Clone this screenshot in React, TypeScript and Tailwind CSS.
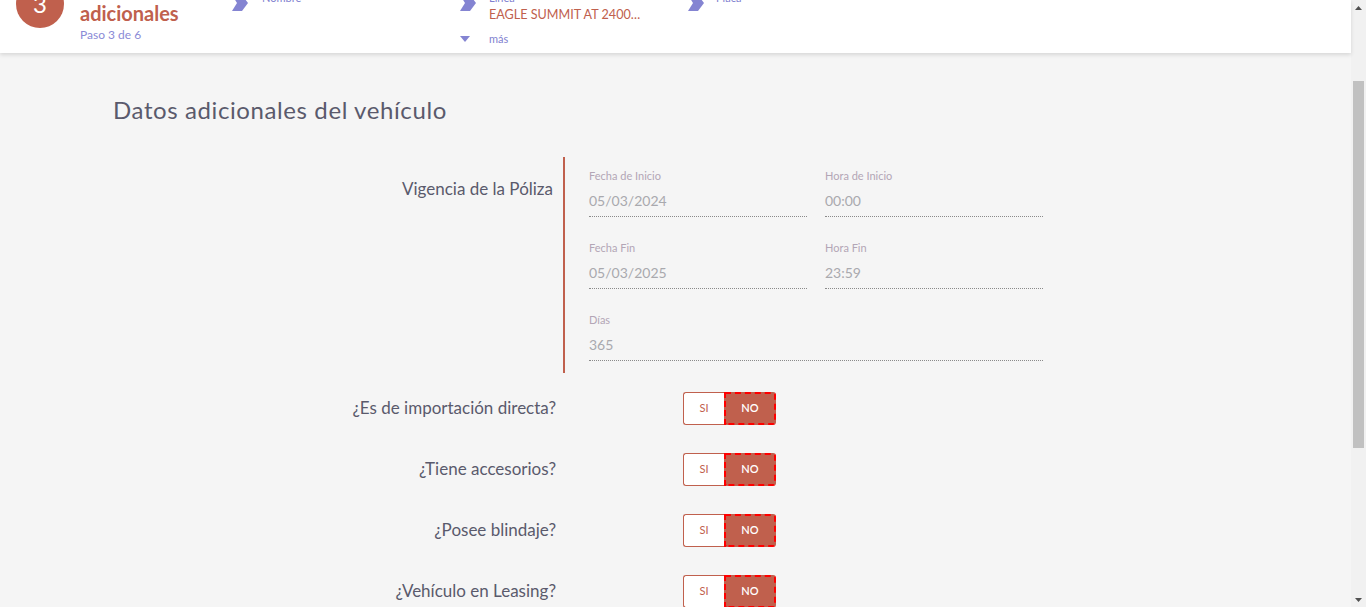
import React from 'react';

const RED = '#c0604d';

// breadcrumb chevron in the step header
const Chevron = () => (
  <svg width="16" height="16" viewBox="0 0 16 16" className="shrink-0">
    <polygon points="0,0 10,0 16,8 10,16 0,16 5,8" fill="#8484d2" />
  </svg>
);

interface FieldProps {
  label: string;
  value: string;
}

const Field: React.FC<FieldProps> = ({ label, value }) => (
  <div className="border-b border-dotted border-[#8a8a8a] pb-[5px]">
    <div className="text-[11px] leading-[14px] text-[#b3a6b6]">{label}</div>
    <div className="mt-[8px] text-[14px] leading-[20px] text-[#a9a9ae]">{value}</div>
  </div>
);

const Toggle = () => (
  <div className="flex h-[33px] w-[93px] text-[11px]">
    <div className="flex w-[41px] items-center justify-center rounded-l-[3px] border border-r-0 border-[#c0604d] bg-white text-[#c0604d]">
      SI
    </div>
    <div className="flex flex-1 items-center justify-center rounded-r-[3px] border-2 border-dashed border-[#ff0000] bg-[#c0604d] font-semibold text-white">
      NO
    </div>
  </div>
);

const questions = [
  '¿Es de importación directa?',
  '¿Tiene accesorios?',
  '¿Posee blindaje?',
  '¿Vehículo en Leasing?',
];

const Header = () => (
  <div className="relative z-10 h-[53px] shrink-0 overflow-hidden bg-white shadow-[0_2px_4px_rgba(0,0,0,0.12)]">
    <div className="-mt-[26px] flex">
      {/* step indicator */}
      <div className="flex w-[232px] shrink-0 pl-[16px]">
        <div
          className="mt-[6px] flex h-12 w-12 shrink-0 items-center justify-center rounded-full text-[24px] text-white"
          style={{ backgroundColor: RED }}
        >
          3
        </div>
        <div className="ml-[16px] mt-[3px] flex flex-col">
          <div className="text-[20px] font-bold leading-[24px] text-[#c0604d]">Datos</div>
          <div className="text-[20px] font-bold leading-[24px] text-[#c0604d]">adicionales</div>
          <div className="mt-[2px] text-[12px] leading-[16px] text-[#8a8ad6]">Paso 3 de 6</div>
        </div>
      </div>

      {/* breadcrumbs */}
      <div className="mt-[17px] flex w-[228px] shrink-0">
        <div className="mt-[4px]"><Chevron /></div>
        <div className="ml-[14px] text-[11px] leading-[14px] text-[#7f7fcf]">Nombre</div>
      </div>
      <div className="mt-[17px] flex w-[228px] shrink-0 flex-col">
        <div className="flex">
          <div className="mt-[4px]"><Chevron /></div>
          <div className="ml-[13px] flex flex-col">
            <div className="text-[11px] leading-[14px] text-[#7f7fcf]">Línea</div>
            <div className="w-[152px] truncate text-[12.6px] leading-[20px] text-[#c0604d]">
              EAGLE SUMMIT AT 2400 CC 4X4
            </div>
          </div>
        </div>
        <div className="mt-[7px] flex items-center">
          <svg width="10" height="6" viewBox="0 0 10 6">
            <polygon points="0,0 10,0 5,6" fill="#8484d2" />
          </svg>
          <span className="ml-[19px] text-[11px] leading-[14px] text-[#7f7fcf]">más</span>
        </div>
      </div>
      <div className="mt-[17px] flex w-[228px] shrink-0">
        <div className="mt-[4px]"><Chevron /></div>
        <div className="ml-[12px] text-[11px] leading-[14px] text-[#7f7fcf]">Placa</div>
      </div>
    </div>
  </div>
);

const ScrollBar = () => (
  <div className="flex h-full w-[15px] shrink-0 flex-col bg-[#f1f1f1]">
    <div className="flex h-[15px] items-center justify-center">
      <svg width="7" height="4" viewBox="0 0 7 4">
        <polygon points="0,4 7,4 3.5,0" fill="#505050" />
      </svg>
    </div>
    <div className="h-[66px]" />
    <div className="mx-[2px] h-[367px] bg-[#c1c1c1]" />
    <div className="flex-1" />
    <div className="flex h-[15px] items-center justify-center">
      <svg width="7" height="4" viewBox="0 0 7 4">
        <polygon points="0,0 7,0 3.5,4" fill="#505050" />
      </svg>
    </div>
  </div>
);

export default function App() {
  return (
    <div
      className="flex h-[607px] w-full overflow-hidden bg-[#f5f5f5]"
      style={{ fontFamily: 'Lato, "Open Sans", sans-serif' }}
    >
      <div className="flex min-w-0 flex-1 flex-col">
        <Header />

        <div className="pl-[113px] pt-[43px]">
          <h1 className="text-[24px] leading-[28px] tracking-[0.6px] text-[#5a5a6c]">
            Datos adicionales del vehículo
          </h1>

          {/* policy dates */}
          <div className="mt-[33px] flex">
            <div className="w-[440px] pt-[20px] text-right text-[17px] leading-[24px] text-[#5a5a6c]">
              Vigencia de la Póliza
            </div>
            <div className="ml-[10px] w-[2px]" style={{ backgroundColor: RED }} />
            <div className="w-[478px] pb-[12px] pl-[24px] pt-[12px]">
              <div className="grid grid-cols-2 gap-x-[18px] gap-y-[24px]">
                <Field label="Fecha de Inicio" value="05/03/2024" />
                <Field label="Hora de Inicio" value="00:00" />
                <Field label="Fecha Fin" value="05/03/2025" />
                <Field label="Hora Fin" value="23:59" />
                <div className="col-span-2">
                  <Field label="Días" value="365" />
                </div>
              </div>
            </div>
          </div>

          {/* yes / no questions */}
          <div className="mt-[19px] flex flex-col gap-[28px]">
            {questions.map((q) => (
              <div key={q} className="flex items-center">
                <div className="w-[443px] pb-[2px] text-right text-[17px] leading-[24px] text-[#5a5a6c]">{q}</div>
                <div className="ml-[127px]">
                  <Toggle />
                </div>
              </div>
            ))}
          </div>
        </div>
      </div>
      <ScrollBar />
    </div>
  );
}
